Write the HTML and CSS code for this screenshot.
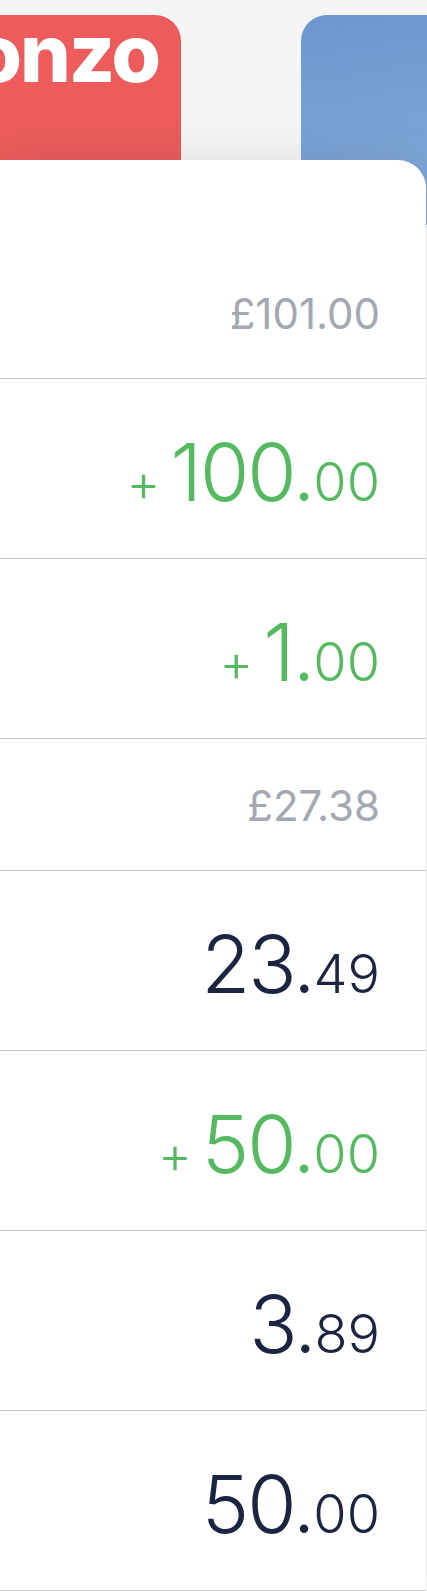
FILE: index.html
```html
<!DOCTYPE html>
<html lang="en">
<head>
    <meta charset="UTF-8">
    <title>Feed</title>
    <link rel="stylesheet" href="styles.css">
</head>
<body>
    <div class="cards">
        <div class="card card-red"><span class="logo">monzo</span></div>
        <div class="card card-blue"></div>
    </div>

    <div class="sheet">
        <div class="row row-head"><span class="balance">£101.00</span></div>
        <div class="row">
            <span class="amount income"><span class="sign">+</span><span class="major">100.</span><span class="minor">00</span></span>
        </div>
        <div class="row">
            <span class="amount income"><span class="sign">+</span><span class="major">1.</span><span class="minor">00</span></span>
        </div>
        <div class="row row-head"><span class="balance">£27.38</span></div>
        <div class="row">
            <span class="amount"><span class="major">23.</span><span class="minor">49</span></span>
        </div>
        <div class="row">
            <span class="amount income"><span class="sign">+</span><span class="major">50.</span><span class="minor">00</span></span>
        </div>
        <div class="row">
            <span class="amount"><span class="major">3.</span><span class="minor">89</span></span>
        </div>
        <div class="row">
            <span class="amount"><span class="major">50.</span><span class="minor">00</span></span>
        </div>
    </div>
</body>
</html>
```

FILE: styles.css
```css
body {
    margin: 0;
    background-color: #f5f5f5;
    font-family: Inter, "Liberation Sans", sans-serif;
    overflow: hidden;
}

/* karty na gorze */
.cards {
    display: flex;
    gap: 120px;
    margin-left: -119px;
    padding-top: 15px;
    height: 210px;
}

.card {
    flex: 0 0 300px;
    height: 210px;
    border-radius: 26px;
}

.card-red {
    background-color: #ec5c5c;
    display: flex;
    justify-content: flex-end;
    align-items: flex-start;
    padding-right: 22px;
    box-sizing: border-box;
}

.card-blue {
    background: linear-gradient(170deg, #6d96ce 0%, #86afdc 100%);
}

.logo {
    color: white;
    font-size: 80px;
    font-weight: 800;
    line-height: 76px;
    letter-spacing: -2px;
}

/* lista */
.sheet {
    position: relative;
    margin-top: -65px;
    margin-right: 1px;
    padding-top: 87px;
    background-color: white;
    border-top-right-radius: 28px;
    box-shadow: 0 0 48px rgba(0, 0, 0, 0.1);
}

.row {
    display: flex;
    justify-content: flex-end;
    align-items: center;
    height: 180px;
    padding: 6px 46px 0 0;
    box-sizing: border-box;
    border-bottom: 1px solid #c8c8cc;
}

.row-head {
    height: 132px;
    padding-top: 2px;
}

.balance {
    font-size: 42px;
    color: #a4a8b3;
}

.amount {
    display: inline-flex;
    align-items: baseline;
    color: #1b2541;
    font-weight: 300;
}

.income {
    color: #55b95f;
}

.sign {
    font-size: 52px;
    margin-right: 10px;
}

.major {
    font-size: 80px;
    letter-spacing: -2px;
}

.minor {
    font-size: 54px;
}
```
